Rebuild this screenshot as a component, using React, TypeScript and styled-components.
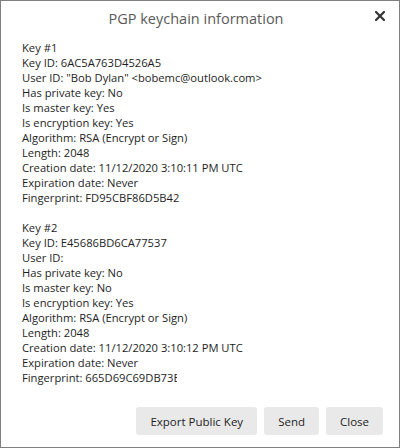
import React from 'react'
import styled, { createGlobalStyle } from 'styled-components'

const GlobalStyle = createGlobalStyle`
  html, body {
    margin: 0;
    padding: 0;
    background: #ffffff;
  }
  body {
    font-family: 'Open Sans', 'Noto Sans', sans-serif;
  }
`

type KeyInfo = {
  keyId: string
  userId: string
  hasPrivate: boolean
  isMaster: boolean
  isEncryption: boolean
  algorithm: string
  length: number
  created: string
  expires: string
  fingerprint: string
  clipFingerprint?: number
}

const keys: KeyInfo[] = [
  {
    keyId: '6AC5A763D4526A5',
    userId: '"Bob Dylan" <bobemc@outlook.com>',
    hasPrivate: false,
    isMaster: true,
    isEncryption: true,
    algorithm: 'RSA (Encrypt or Sign)',
    length: 2048,
    created: '11/12/2020 3:10:11 PM UTC',
    expires: 'Never',
    fingerprint: 'FD95CBF86D5B42',
  },
  {
    keyId: 'E45686BD6CA77537',
    userId: '',
    hasPrivate: false,
    isMaster: false,
    isEncryption: true,
    algorithm: 'RSA (Encrypt or Sign)',
    length: 2048,
    created: '11/12/2020 3:10:12 PM UTC',
    expires: 'Never',
    fingerprint: '665D69C69DB73E',
    clipFingerprint: 92,
  },
]

const yesNo = (v: boolean) => (v ? 'Yes' : 'No')

const Window = styled.div`
  box-sizing: border-box;
  width: 400px;
  height: 448px;
  border: 1px solid #7f7f7f;
  display: flex;
  flex-direction: column;
  background: #ffffff;
  color: #1e1e1e;
`

const Header = styled.div`
  position: relative;
  height: 35px;
  padding-right: 8px;
  display: flex;
  align-items: center;
  justify-content: center;
`

const Title = styled.h1`
  margin: 0;
  font-size: 14.5px;
  font-weight: 400;
  color: #5a5a5a;
`

const CloseIcon = styled.button`
  position: absolute;
  right: 12px;
  top: 8px;
  width: 14px;
  height: 14px;
  padding: 0;
  border: 0;
  background: none;
  display: flex;
  align-items: center;
  justify-content: center;
`

const Body = styled.div`
  padding: 4px 21px 0;
  font-size: 11.2px;
  line-height: 15px;
`

const KeyBlock = styled.div`
  & + & {
    margin-top: 15px;
  }
`

const Line = styled.div`
  white-space: nowrap;
`

const Clipped = styled.span<{ $width: number }>`
  display: inline-block;
  vertical-align: bottom;
  overflow: hidden;
  width: ${p => p.$width}px;
`

const Footer = styled.div`
  margin-top: auto;
  display: flex;
  justify-content: flex-end;
  gap: 7px;
  padding: 0 16px 12px;
`

const Button = styled.button`
  height: 28px;
  padding: 0 14px;
  border: 0;
  border-radius: 3px;
  background: #e9e9e9;
  color: #1e1e1e;
  font-family: 'Open Sans', 'Noto Sans', sans-serif;
  font-size: 11.5px;
`

const KeyDetails = ({ info, index }: { info: KeyInfo; index: number }) => (
  <KeyBlock>
    <Line>Key #{index + 1}</Line>
    <Line>Key ID: {info.keyId}</Line>
    <Line>User ID: {info.userId}</Line>
    <Line>Has private key: {yesNo(info.hasPrivate)}</Line>
    <Line>Is master key: {yesNo(info.isMaster)}</Line>
    <Line>Is encryption key: {yesNo(info.isEncryption)}</Line>
    <Line>Algorithm: {info.algorithm}</Line>
    <Line>Length: {info.length}</Line>
    <Line>Creation date: {info.created}</Line>
    <Line>Expiration date: {info.expires}</Line>
    <Line>
      Fingerprint:{' '}
      {info.clipFingerprint ? (
        <Clipped $width={info.clipFingerprint}>{info.fingerprint}</Clipped>
      ) : (
        info.fingerprint
      )}
    </Line>
  </KeyBlock>
)

export default function App() {
  return (
    <>
      <GlobalStyle />
      <Window>
        <Header>
          <Title>PGP keychain information</Title>
          <CloseIcon aria-label="Close">
            <svg width="10" height="10" viewBox="0 0 10 10">
              <path d="M1 1 L9 9 M9 1 L1 9" stroke="#333" strokeWidth="2.2" strokeLinecap="square" />
            </svg>
          </CloseIcon>
        </Header>
        <Body>
          {keys.map((k, i) => (
            <KeyDetails key={k.keyId} info={k} index={i} />
          ))}
        </Body>
        <Footer>
          <Button>Export Public Key</Button>
          <Button>Send</Button>
          <Button>Close</Button>
        </Footer>
      </Window>
    </>
  )
}
